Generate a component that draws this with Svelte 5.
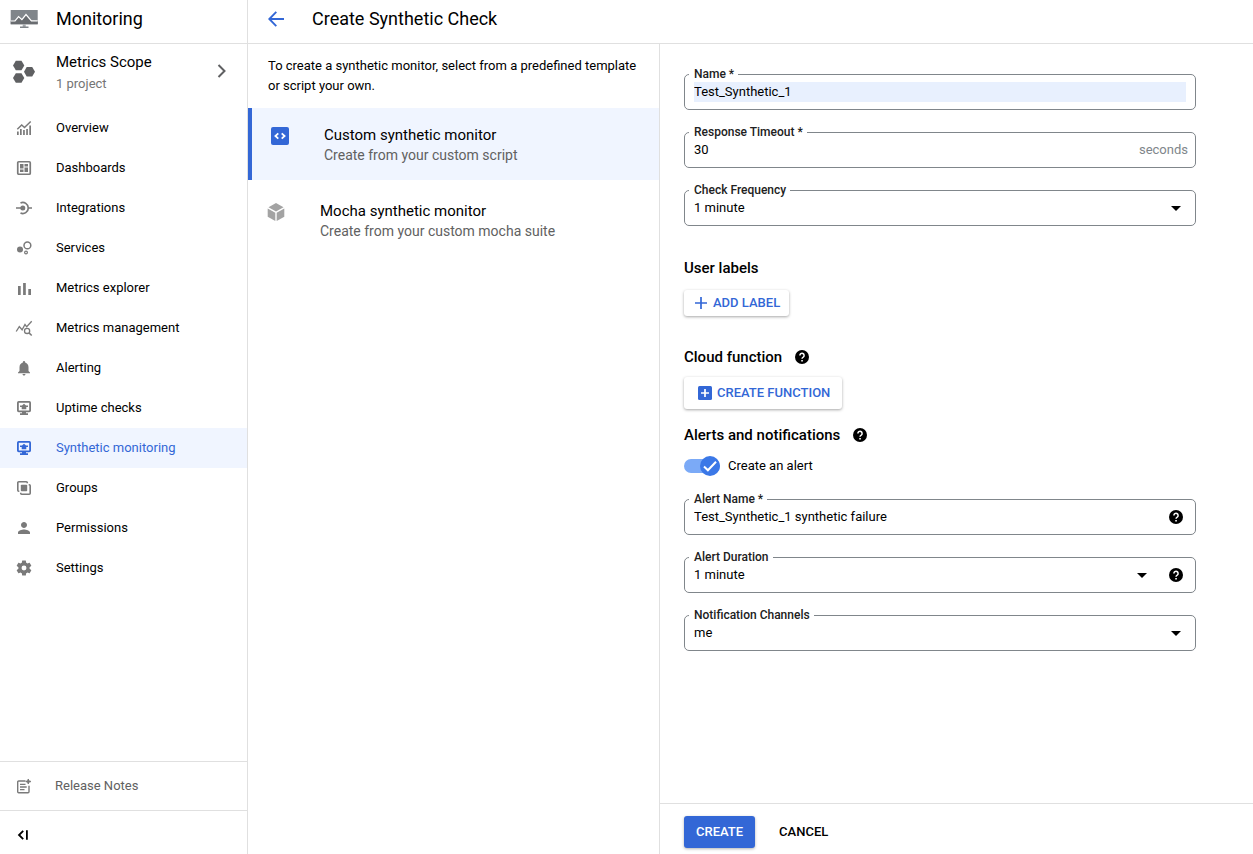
<script>
  const navItems = [
    { label: 'Overview', icon: 'overview' },
    { label: 'Dashboards', icon: 'dashboards' },
    { label: 'Integrations', icon: 'integrations' },
    { label: 'Services', icon: 'services' },
    { label: 'Metrics explorer', icon: 'explorer' },
    { label: 'Metrics management', icon: 'management' },
    { label: 'Alerting', icon: 'alerting' },
    { label: 'Uptime checks', icon: 'screen' },
    { label: 'Synthetic monitoring', icon: 'screen', active: true },
    { label: 'Groups', icon: 'groups' },
    { label: 'Permissions', icon: 'person' },
    { label: 'Settings', icon: 'settings' }
  ];

  let name = $state('Test_Synthetic_1');
  let timeout = $state('30');
  let alertName = $state('Test_Synthetic_1 synthetic failure');
  let createAlert = $state(true);
  let template = $state('custom');
</script>

{#snippet navIcon(kind)}
  <svg class="icon" viewBox="0 0 18 18" aria-hidden="true">
    {#if kind === 'overview'}
      <path d="M2 12.5h1.700V16H2zM5 10h1.700v6H5zM8.100 11h1.700v5H8.100zM11.200 10h1.700v6h-1.700zM14.300 6.500H16V16h-1.700z" fill="currentColor" />
      <path d="M2.300 10.200 6.700 6l2.800 2.500 6.200-6" fill="none" stroke="currentColor" stroke-width="1.500" />
    {:else if kind === 'dashboards'}
      <rect x="2.750" y="2.750" width="12.500" height="12.500" rx="1" fill="none" stroke="currentColor" stroke-width="1.700" />
      <path d="M5 5h3.500v4.500H5zM5 10.500h3.500V13H5zM9.500 5H13v2.500H9.500zM9.500 8.500H13V13H9.500z" fill="currentColor" />
    {:else if kind === 'integrations'}
      <circle cx="7.800" cy="9" r="2.500" fill="currentColor" />
      <path d="M1 9h6M13 9h4M5.500 4a5.500 5.500 0 1 1 0 10" fill="none" stroke="currentColor" stroke-width="1.700" />
    {:else if kind === 'services'}
      <circle cx="5" cy="10.600" r="3" fill="currentColor" />
      <circle cx="12.400" cy="6.400" r="3.400" fill="none" stroke="currentColor" stroke-width="1.500" />
      <circle cx="11" cy="13.500" r="1.400" fill="none" stroke="currentColor" stroke-width="1.200" />
    {:else if kind === 'explorer'}
      <path d="M3 7h2.700v9H3zM8.100 4h2.700v12H8.100zM13.300 10H16v6h-2.700z" fill="currentColor" />
    {:else if kind === 'management'}
      <path d="M1.200 12.500 4.300 7.600l2.800 3.200 2.900-5.300 1.700 2.300 5-5.600" fill="none" stroke="currentColor" stroke-width="1.300" />
      <circle cx="12.100" cy="11.900" r="2.600" fill="none" stroke="currentColor" stroke-width="1.300" />
      <path d="m14 13.900 2.700 2.600" stroke="currentColor" stroke-width="1.500" />
    {:else if kind === 'alerting'}
      <path transform="scale(.75)" d="M12 22c1.100 0 2-.9 2-2h-4c0 1.100.9 2 2 2zm6-6v-5c0-3.070-1.640-5.640-4.500-6.320V4a1.500 1.500 0 0 0-3 0v.68C7.630 5.360 6 7.920 6 11v5l-2 2v1h16v-1z" fill="currentColor" />
    {:else if kind === 'screen'}
      <rect x="2.900" y="2.900" width="12.200" height="9.400" rx=".8" fill="none" stroke="currentColor" stroke-width="1.800" />
      <path d="M9 4.700 11 6.500h2V8h-1.700v2.200H6.700V8H5V6.500h2zM7 12.500h4v1.700h2V16H5v-1.800h2z" fill="currentColor" />
    {:else if kind === 'groups'}
      <path d="M12.300 4.300V3.800a1 1 0 0 0-1-1H3.800a1 1 0 0 0-1 1v7.500a1 1 0 0 0 1 1h.5M5.700 13.700v.5a1 1 0 0 0 1 1h7.500a1 1 0 0 0 1-1V6.700a1 1 0 0 0-1-1h-.5" fill="none" stroke="currentColor" stroke-width="1.600" />
      <rect x="5.800" y="5.800" width="6.400" height="6.400" rx=".8" fill="currentColor" />
    {:else if kind === 'person'}
      <path transform="scale(.75)" d="M12 12c2.210 0 4-1.790 4-4s-1.790-4-4-4-4 1.790-4 4 1.790 4 4 4zm0 2c-2.670 0-8 1.340-8 4v2h16v-2c0-2.660-5.330-4-8-4z" fill="currentColor" />
    {:else if kind === 'settings'}
      <path transform="scale(.75)" d="M19.430 12.980c.04-.32.07-.64.07-.98s-.03-.66-.07-.98l2.110-1.650c.19-.15.24-.42.12-.64l-2-3.460c-.12-.22-.39-.3-.61-.22l-2.490 1c-.52-.4-1.080-.73-1.690-.98l-.38-2.650A.488.488 0 0 0 14 2h-4c-.25 0-.46.18-.49.42l-.38 2.650c-.61.25-1.170.59-1.690.98l-2.490-1c-.23-.09-.49 0-.61.22l-2 3.460c-.13.22-.07.49.12.64l2.110 1.650c-.04.32-.07.65-.07.98s.03.66.07.98l-2.110 1.650c-.19.15-.24.42-.12.64l2 3.460c.12.22.39.3.61.22l2.490-1c.52.4 1.080.73 1.690.98l.38 2.650c.03.24.24.42.49.42h4c.25 0 .46-.18.49-.42l.38-2.650c.61-.25 1.170-.59 1.690-.98l2.490 1c.23.09.49 0 .61-.22l2-3.460c.12-.22.07-.49-.12-.64zM12 15.300a3.300 3.300 0 1 1 0-6.600 3.300 3.300 0 0 1 0 6.600z" fill="currentColor" />
    {:else if kind === 'notes'}
      <path d="M10.500 4H3.700a1 1 0 0 0-1 1v9.800a1 1 0 0 0 1 1H13a1 1 0 0 0 1-1V8.700" fill="none" stroke="currentColor" stroke-width="1.400" />
      <path d="M5 7.300h5.500M5 10h6.700M5 12.600h4.500M13.300 2v5M10.800 4.500h5" fill="none" stroke="currentColor" stroke-width="1.300" />
      <path d="m13.300 1.700.9 1.900 2 .9-2 .9-.9 1.900-.9-1.900-2-.9 2-.9z" fill="currentColor" />
    {/if}
  </svg>
{/snippet}

{#snippet help(label)}
  <button class="help" type="button" aria-label={label}>
    <svg viewBox="0 0 14 14" aria-hidden="true">
      <circle cx="7" cy="7" r="7" fill="#000" />
      <path d="M4.900 5.400a2.100 2.100 0 1 1 3.500 1.550c-.8.700-1.350.95-1.350 1.850" fill="none" stroke="#fff" stroke-width="1.500" />
      <path d="M6.250 9.900h1.600v1.500h-1.600z" fill="#fff" />
    </svg>
  </button>
{/snippet}

{#snippet arrow()}
  <svg class="arrow" viewBox="0 0 10 5" aria-hidden="true"><path d="M0 0h10L5 5z" fill="#000" /></svg>
{/snippet}

<div class="app">
  <aside class="sidebar">
    <div class="product">
      <svg class="logo" viewBox="0 0 28 20" aria-hidden="true">
        <path d="M.700 1h27v14.300h-27z" fill="#80858a" />
        <path d="M.700 12H5l3.700-4 3.300 2.700L16 6l5.500 6h6.200v3.300h-27z" fill="#696c70" />
        <path d="M.700 12H5l3.600-4.400 3.300 3L16 5.500l5.400 6.300h6.300" fill="none" stroke="#fff" stroke-width="1.200" />
        <path d="M12.700 15.300h3V18h-3z" fill="#a5a8ab" />
        <path d="M10 17.500h8.500V19H10z" fill="#80858a" />
      </svg>
      <h2>Monitoring</h2>
    </div>

    <button class="scope" type="button">
      <svg class="hexes" viewBox="0 0 24 24" aria-hidden="true">
        <g fill="#5f6062">
          <path d="M1 5.500 3.800.800h5.700l2.800 4.700-2.800 4.800H3.800z" />
          <path d="M12 11.800l2.700-4.700h5.500L23 11.800l-2.800 4.700h-5.500z" />
          <path d="M1 18l2.800-4.800h5.700l2.800 4.800-2.800 4.700H3.800z" />
        </g>
      </svg>
      <span class="scope-text">
        <span class="scope-title">Metrics Scope</span>
        <span class="scope-sub">1 project</span>
      </span>
      <svg class="chevron" viewBox="0 0 10 14" aria-hidden="true"><path d="m1.500 1 6 6-6 6" fill="none" stroke="#5f6062" stroke-width="2" /></svg>
    </button>

    <nav aria-label="Monitoring">
      {#each navItems as item}
        <a href="#{item.label}" class:active={item.active} aria-current={item.active ? 'page' : undefined}>
          {@render navIcon(item.icon)}
          <span>{item.label}</span>
        </a>
      {/each}
    </nav>

    <a class="release" href="#release-notes">
      {@render navIcon('notes')}
      <span>Release Notes</span>
    </a>
    <div class="collapse-row">
      <button class="collapse" type="button" aria-label="Collapse menu">
        <svg viewBox="0 0 12 10" aria-hidden="true"><path d="M6.200.800 2 5l4.200 4.200M9.900.300v9.400" fill="none" stroke="#000" stroke-width="1.800" /></svg>
      </button>
    </div>
  </aside>

  <main>
    <header>
      <button class="back" type="button" aria-label="Back">
        <svg viewBox="0 0 16 16" aria-hidden="true"><path d="M16 8H1.500M8.300.900 1.300 8l7 7.100" fill="none" stroke="#3367d6" stroke-width="1.900" /></svg>
      </button>
      <h1>Create Synthetic Check</h1>
    </header>

    <div class="body">
      <section class="templates">
        <p>To create a synthetic monitor, select from a predefined template or script your own.</p>
        <button class="card" class:selected={template === 'custom'} type="button" onclick={() => (template = 'custom')}>
          <svg viewBox="0 0 20 22" aria-hidden="true">
            <rect x="1" y="2" width="18" height="18" rx="2" fill="#3367d6" />
            <path d="M8.300 8.300 5.400 11l2.900 2.700M11.700 8.300l2.900 2.700-2.900 2.700" fill="none" stroke="#fff" stroke-width="1.800" />
          </svg>
          <span class="card-text">
            <span class="card-title">Custom synthetic monitor</span>
            <span class="card-sub">Create from your custom script</span>
          </span>
        </button>
        <button class="card" class:selected={template === 'mocha'} type="button" onclick={() => (template = 'mocha')}>
          <svg viewBox="0 0 20 22" aria-hidden="true">
            <g fill="#a3a3a3">
              <path d="M10 2l7.500 4.200L10 10.400 2.500 6.200z" />
              <path d="M1.700 7.500l7.600 4.200v8.400l-7.600-4.300z" />
              <path d="M18.300 7.500l-7.600 4.200v8.400l7.600-4.300z" />
            </g>
          </svg>
          <span class="card-text">
            <span class="card-title">Mocha synthetic monitor</span>
            <span class="card-sub">Create from your custom mocha suite</span>
          </span>
        </button>
      </section>

      <form onsubmit={(e) => e.preventDefault()}>
        <div class="fields">
          <div class="group">
            <fieldset>
              <legend><label for="name">Name *</label></legend>
              <div class="control"><input id="name" class="filled" type="text" bind:value={name} /></div>
            </fieldset>
            <fieldset>
              <legend><label for="timeout">Response Timeout *</label></legend>
              <div class="control"><input id="timeout" type="text" bind:value={timeout} /><span class="unit">seconds</span></div>
            </fieldset>
            <fieldset>
              <legend><label for="frequency">Check Frequency</label></legend>
              <div class="control">
                <div class="select"><select id="frequency"><option>1 minute</option><option>5 minutes</option></select>{@render arrow()}</div>
              </div>
            </fieldset>
          </div>

          <h3 class="labels-title">User labels</h3>
          <button class="raised small" type="button">
            <svg viewBox="0 0 12 12" aria-hidden="true"><path d="M6 0v12M0 6h12" stroke="#3367d6" stroke-width="1.700" /></svg>
            ADD LABEL
          </button>

          <h3 class="function-title">Cloud function {@render help('About cloud functions')}</h3>
          <button class="raised" type="button">
            <svg viewBox="0 0 14 14" aria-hidden="true"><rect width="14" height="14" rx="1.500" fill="#3367d6" /><path d="M7 3v8M3 7h8" stroke="#fff" stroke-width="1.700" /></svg>
            CREATE FUNCTION
          </button>

          <h3 class="alerts-title">Alerts and notifications {@render help('About alerts')}</h3>
          <label class="toggle">
            <input type="checkbox" role="switch" bind:checked={createAlert} />
            <span class="track">
              <span class="thumb"><svg viewBox="0 0 20 20" aria-hidden="true"><path d="m4 10.500 3.900 3.800L16 5.700" fill="none" stroke="#fff" stroke-width="2" /></svg></span>
            </span>
            <span>Create an alert</span>
          </label>

          <div class="group">
            <fieldset>
              <legend><label for="alert-name">Alert Name *</label></legend>
              <div class="control"><input id="alert-name" type="text" bind:value={alertName} />{@render help('About the alert name')}</div>
            </fieldset>
            <fieldset>
              <legend><label for="duration">Alert Duration</label></legend>
              <div class="control">
                <div class="select"><select id="duration"><option>1 minute</option><option>5 minutes</option></select>{@render arrow()}</div>
                {@render help('About the alert duration')}
              </div>
            </fieldset>
            <fieldset>
              <legend><label for="channels">Notification Channels</label></legend>
              <div class="control">
                <div class="select"><select id="channels"><option>me</option></select>{@render arrow()}</div>
              </div>
            </fieldset>
          </div>
        </div>

        <footer>
          <button class="primary" type="submit">CREATE</button>
          <button class="plain" type="button">CANCEL</button>
        </footer>
      </form>
    </div>
  </main>
</div>

<style>
  :global(body) {
    margin: 0;
    background: #fff;
  }
  .app {
    display: flex;
    min-height: 100vh;
    font: 400 13px/20px Roboto, 'Liberation Sans', sans-serif;
    color: #000;
  }
  .app :global(*) {
    box-sizing: border-box;
  }
  button,
  input,
  select {
    margin: 0;
    padding: 0;
    border: 0;
    background: none;
    font: inherit;
    color: inherit;
    text-align: left;
  }
  button {
    cursor: pointer;
  }
  svg {
    display: block;
    flex: none;
  }
  h1,
  h2,
  h3,
  p {
    margin: 0;
  }
  h1,
  h2 {
    font-size: 18px;
    line-height: 24px;
    font-weight: 400;
  }

  .sidebar {
    flex: 0 0 248px;
    display: flex;
    flex-direction: column;
    border-right: 1px solid #e0e0e0;
  }
  .product {
    display: flex;
    align-items: center;
    gap: 18px;
    height: 44px;
    padding: 0 10px 5px;
    border-bottom: 1px solid #e0e0e0;
  }
  .logo {
    width: 28px;
    height: 20px;
  }
  .scope {
    display: flex;
    align-items: center;
    height: 64px;
    padding: 0 20px 8px 12px;
    gap: 20px;
  }
  .hexes {
    width: 24px;
    height: 24px;
  }
  .scope-text {
    flex: 1;
    display: flex;
    flex-direction: column;
    gap: 2px;
    padding-top: 2px;
  }
  .scope-title {
    font-size: 15px;
  }
  .scope-sub {
    color: #757575;
  }
  .chevron {
    width: 10px;
    height: 14px;
    margin-bottom: 2px;
  }
  nav {
    flex: 1;
  }
  nav a,
  .release {
    display: flex;
    align-items: center;
    gap: 23px;
    height: 40px;
    padding-left: 15px;
    color: #000;
    text-decoration: none;
  }
  .icon {
    width: 18px;
    height: 18px;
    color: #7a7a7a;
  }
  nav a.active {
    background: #f0f5ff;
    color: #3367d6;
  }
  nav a.active .icon {
    color: #3367d6;
  }
  .release {
    gap: 22px;
    height: 49px;
    border-top: 1px solid #e0e0e0;
    color: #616161;
  }
  .collapse-row {
    display: flex;
    align-items: center;
    height: 44px;
    padding: 4px 17px 0;
    border-top: 1px solid #e0e0e0;
  }
  .collapse svg {
    width: 12px;
    height: 10px;
  }

  main {
    flex: 1;
    display: flex;
    flex-direction: column;
    min-width: 0;
  }
  header {
    display: flex;
    align-items: center;
    gap: 28px;
    height: 44px;
    padding: 0 20px 5px;
    border-bottom: 1px solid #e0e0e0;
  }
  .back svg {
    width: 16px;
    height: 16px;
  }
  .body {
    flex: 1;
    display: flex;
  }
  .templates {
    flex: 0 0 412px;
    display: flex;
    flex-direction: column;
    gap: 4px;
    border-right: 1px solid #e0e0e0;
  }
  .templates p {
    padding: 12px 20px 8px;
  }
  .card {
    display: flex;
    align-items: flex-start;
    gap: 34px;
    height: 72px;
    padding: 17px 18px;
  }
  .card.selected {
    border-left: 4px solid #3367d6;
    background: #f0f5ff;
  }
  .card svg {
    width: 20px;
    height: 22px;
  }
  .card-text {
    display: flex;
    flex-direction: column;
  }
  .card-title {
    font-size: 15px;
  }
  .card-sub {
    font-size: 14px;
    color: #616161;
  }

  form {
    flex: 1;
    display: flex;
    flex-direction: column;
    min-width: 0;
  }
  .fields {
    flex: 1;
    max-width: 560px;
    padding: 22px 24px;
  }
  .group {
    display: flex;
    flex-direction: column;
    gap: 14px;
  }
  fieldset {
    min-width: 0;
    margin: 0;
    padding: 0 9px 7px 4px;
    border: 1px solid #80868b;
    border-radius: 5px;
  }
  legend {
    padding: 0 4px 0 5px;
    font-size: 12px;
    line-height: 16px;
    font-weight: 500;
    color: #212121;
  }
  legend label {
    display: block;
  }
  .control {
    display: flex;
    align-items: center;
    height: 20px;
    padding-left: 5px;
  }
  .control input {
    flex: 1;
    min-width: 0;
    height: 20px;
    outline: 0;
  }
  .control .filled {
    background: #e8f0fe;
  }
  .unit {
    margin-right: -2px;
    color: #80868b;
  }
  .control .help {
    margin: 0 3px 0 17px;
  }
  .select {
    flex: 1;
    display: grid;
    align-items: center;
  }
  .select > :global(*) {
    grid-area: 1 / 1;
  }
  select {
    appearance: none;
    height: 20px;
    outline: 0;
  }
  .arrow {
    justify-self: end;
    width: 10px;
    height: 5px;
    margin-right: 5px;
    pointer-events: none;
  }

  h3 {
    display: flex;
    align-items: center;
    gap: 13px;
    font-size: 15px;
    line-height: 20px;
    font-weight: 500;
  }
  .help svg {
    width: 14px;
    height: 14px;
  }
  .labels-title {
    margin: 32px 0 12px;
  }
  .function-title {
    margin: 31px 0 10px;
  }
  .alerts-title {
    margin: 16px 0 11px;
  }
  .raised,
  .primary,
  .plain {
    display: flex;
    align-items: center;
    height: 32px;
    padding: 0 12px;
    border-radius: 3px;
    font-weight: 500;
  }
  .raised {
    gap: 5px;
    padding-left: 14px;
    color: #3367d6;
    box-shadow: 0 1px 3px rgba(0, 0, 0, 0.35);
  }
  .raised svg {
    width: 14px;
    height: 14px;
  }
  .raised.small {
    gap: 6px;
    height: 26px;
    padding: 0 9px 0 11px;
  }
  .raised.small svg {
    width: 12px;
    height: 12px;
  }

  .toggle {
    display: flex;
    align-items: center;
    gap: 8px;
    width: fit-content;
    margin-bottom: 15px;
    cursor: pointer;
  }
  .toggle input {
    position: absolute;
    opacity: 0;
  }
  .track {
    display: flex;
    align-items: center;
    width: 36px;
    height: 14px;
    background: #bdbdbd;
    border-radius: 7px;
  }
  .thumb {
    flex: none;
    width: 20px;
    height: 20px;
    border-radius: 50%;
    background: #9e9e9e;
  }
  .toggle input:checked + .track {
    justify-content: flex-end;
    background: #7baaf7;
  }
  .toggle input:checked + .track .thumb {
    background: #3b78e7;
  }

  footer {
    display: flex;
    gap: 12px;
    padding: 12px 24px 6px;
    border-top: 1px solid #e0e0e0;
  }
  .primary {
    background: #3367d6;
    color: #fff;
    box-shadow: 0 1px 3px rgba(0, 0, 0, 0.3);
  }
</style>
